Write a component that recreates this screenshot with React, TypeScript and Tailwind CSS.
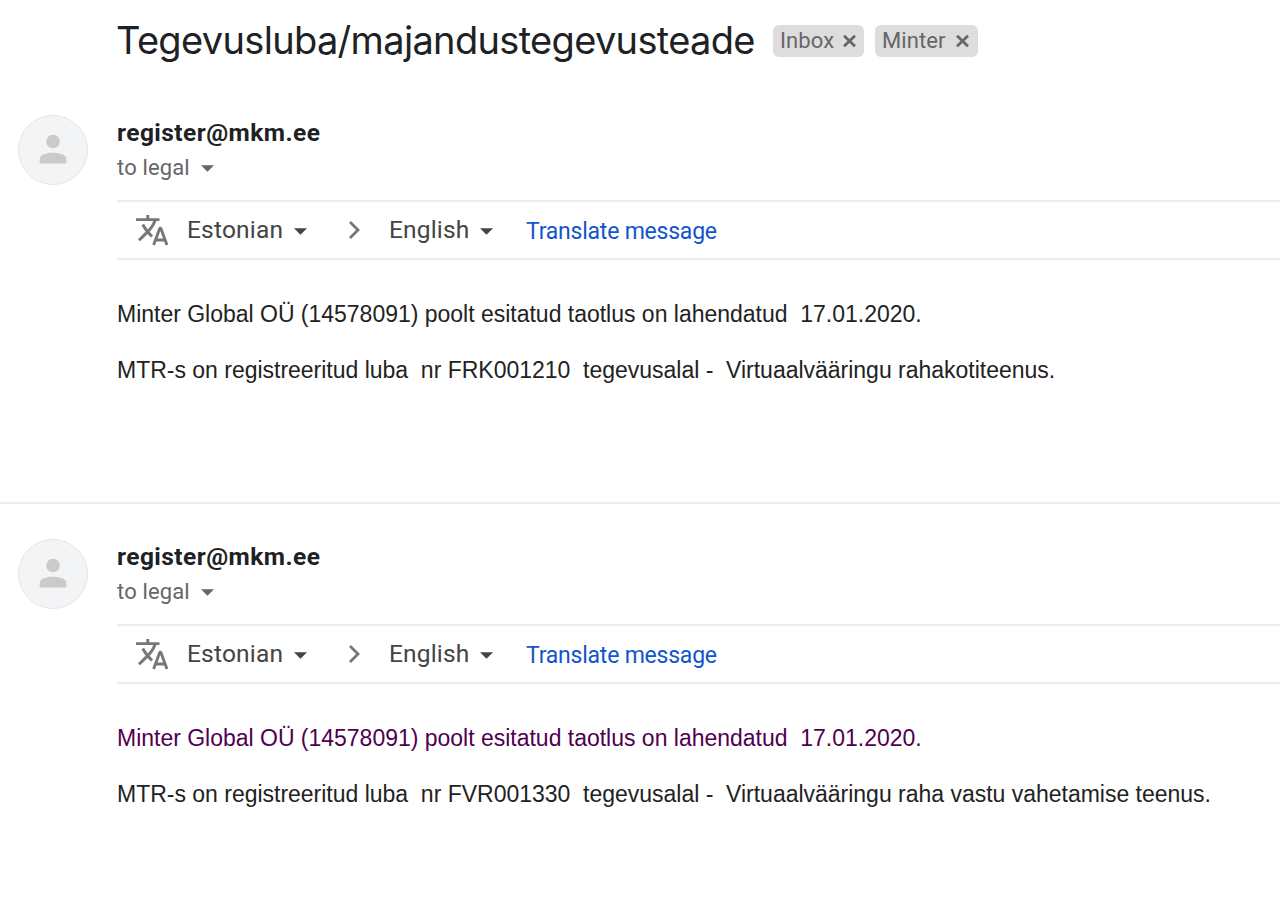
const MESSAGES = [
  {
    id: "wallet",
    first: "Minter Global OÜ (14578091) poolt esitatud taotlus on lahendatud  17.01.2020.",
    second: "MTR-s on registreeritud luba  nr FRK001210  tegevusalal -  Virtuaalvääringu rahakotiteenus.",
    firstColor: "text-[#222222]",
  },
  {
    id: "exchange",
    first: "Minter Global OÜ (14578091) poolt esitatud taotlus on lahendatud  17.01.2020.",
    second: "MTR-s on registreeritud luba  nr FVR001330  tegevusalal -  Virtuaalvääringu raha vastu vahetamise teenus.",
    firstColor: "text-[#500050]",
  },
] as const;

function Caret({ className }: { className: string }) {
  return (
    <svg viewBox="0 0 14 7" className={className} fill="currentColor" aria-hidden="true">
      <path d="M0 0h14L7 7z" />
    </svg>
  );
}

function Label({ name, className }: { name: string; className: string }) {
  return (
    <span className={`flex h-8 items-center justify-between rounded-[6px] bg-[#dddddd] pl-[7px] text-[22px] text-[#666666] ${className}`}>
      <span className="-mt-0.5 whitespace-nowrap tracking-[0.1px]">{name}</span>
      <svg viewBox="0 0 13 12" className="h-3 w-[13px] shrink-0" stroke="currentColor" strokeWidth="2.7" aria-hidden="true">
        <path d="M1 .7l11 10.6M12 .7L1 11.3" />
      </svg>
    </span>
  );
}

function Avatar() {
  return (
    <div className="ml-[18px] flex h-[70px] w-[70px] shrink-0 items-center justify-center rounded-full border border-[#e4e5e6] bg-[#f3f4f5]">
      <svg viewBox="0 0 28 30" className="-mt-0.5 h-[30px] w-7" fill="#cacaca" aria-hidden="true">
        <circle cx="14" cy="7.5" r="6.8" />
        <path d="M.7 29.5v-4.5C.7 21 7 18.800 14 18.800S27.300 21 27.300 25v4.500z" />
      </svg>
    </div>
  );
}

function TranslateBar() {
  return (
    <div className="flex h-[60px] items-center border-y-2 border-[#ececee] text-[24.5px] text-[#444444]">
      <svg viewBox="0 0 36 36" className="ml-[17px] h-9 w-9" fill="none" stroke="#777777" strokeWidth="2.9" strokeLinejoin="bevel" aria-hidden="true">
        <path d="M2 7.600h23.500M13.800 3v4.600M21.200 8C19.500 14 16 18 5 28.200M8.800 12.500C11 17 14 20.500 18 24.500" />
        <path d="M19.600 33l6.200-16.800h1L33 33M21.600 28h9.400" />
      </svg>
      <span className="ml-[17px] w-[96px] whitespace-nowrap tracking-[0.2px]">Estonian</span>
      <Caret className="ml-[11px] mt-0.5 h-[7px] w-[13px]" />
      <svg viewBox="0 0 12 18" className="ml-[41px] h-[18px] w-3" fill="none" stroke="#757575" strokeWidth="2.8" aria-hidden="true">
        <path d="M2 1l8 8-8 8" />
      </svg>
      <span className="ml-[29px] w-[80px] whitespace-nowrap tracking-[0.15px]">English</span>
      <Caret className="ml-[11px] mt-0.5 h-[7px] w-[13px]" />
      <span className="ml-[33px] mt-1 whitespace-nowrap text-[23px] tracking-[-0.22px] text-[#1155cc]">Translate message</span>
    </div>
  );
}

function Message({ message }: { message: (typeof MESSAGES)[number] }) {
  return (
    <article className="flex items-start">
      <Avatar />
      <div className="ml-[29px] min-w-0 flex-1">
        <h2 className="mt-[2px] h-8 text-[24.5px] font-bold leading-8 tracking-[0.45px] text-[#202124]">register@mkm.ee</h2>
        <div className="mt-[2px] flex h-8 items-center text-[22px] text-[#666666]">
          <span className="tracking-[0.15px]">to legal</span>
          <Caret className="ml-[11px] mt-0.5 h-[7px] w-[13px]" />
        </div>
        <div className="mt-[17px]">
          <TranslateBar />
        </div>
        <div className="mt-[40px] whitespace-pre font-['Liberation_Sans',Arial,sans-serif] text-[23px] leading-7 tracking-[-0.012px] text-[#222222]">
          <p className={message.firstColor}>{message.first}</p>
          <p className="mt-7">{message.second}</p>
        </div>
      </div>
    </article>
  );
}

export default function App() {
  return (
    <main className="h-[910px] w-[1280px] overflow-hidden bg-white font-[Roboto,sans-serif]">
      <header className="flex h-[115px] items-start pl-[117px] pt-[25px]">
        <h1 className="-ml-px -mt-[9px] w-[657px] whitespace-nowrap font-[Inter,sans-serif] text-[38px] leading-[48px] tracking-[-0.67px] text-[#202124]">
          Tegevusluba/majandustegevusteade
        </h1>
        <Label name="Inbox" className="w-[91px] pr-2" />
        <Label name="Minter" className="ml-[11px] w-[103px] pr-[9px]" />
      </header>
      <div className="h-[389px] border-b-2 border-[#ececee]">
        <Message message={MESSAGES[0]} />
      </div>
      <div className="pt-[35px]">
        <Message message={MESSAGES[1]} />
      </div>
    </main>
  );
}
